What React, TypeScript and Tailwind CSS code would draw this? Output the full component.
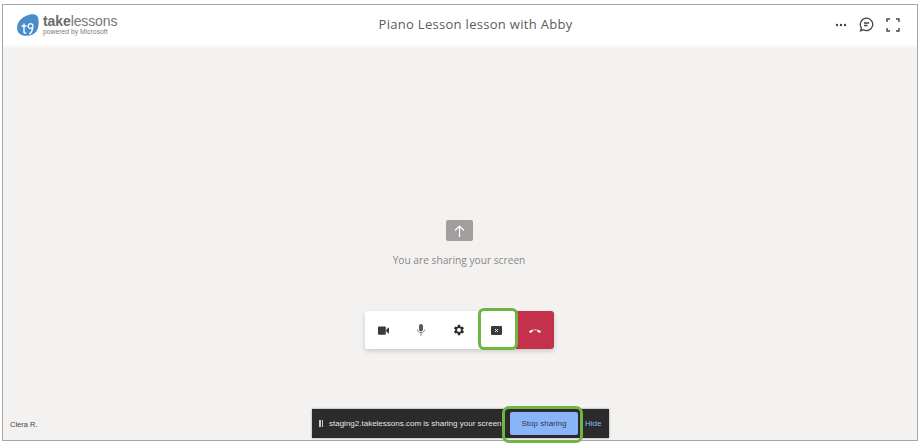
import { Fragment } from "react";

function Logo() {
  return (
    <div className="flex items-center gap-[4px]">
      <svg width="22" height="24" viewBox="0 0 22 23">
        <path d="M2 8C5 4 10 1 15 .7c4-.2 6 1.300 6.500 5 .5 4 0 9-2 12-2.500 3.500-7 5-12 4.500-4-.4-7-2.500-7.300-6.700C0 13 .5 10 2 8z" fill="#4a8cc9" />
        <path d="M7 10v8.500c0 1 1 1.500 2.300.8M4.500 12.500h5" stroke="#fff" strokeWidth="1.400" fill="none" />
        <path d="M16 12.500a2.400 2.400 0 1 0-.3 1.200c0 2.300-1 5-3.300 7" stroke="#fff" strokeWidth="1.400" fill="none" />
      </svg>
      <div className="flex flex-col leading-none">
        <div className="text-[14px] leading-[14px] text-[#777] tracking-[-0.1px]">
          <span className="font-bold text-[#6a6a6a]">take</span>
          <span>lessons</span>
        </div>
        <div className="text-[6.800px] leading-[8px] text-[#808080] font-medium">powered by Microsoft</div>
      </div>
    </div>
  );
}

function Header() {
  return (
    <header className="h-[39px] bg-white flex items-center relative pl-[14px] pr-[17px] justify-between">
      <Logo />
      <div className="absolute left-0 right-0 text-center text-[13px] text-[#5c5c5c] tracking-[0.3px] pointer-events-none pl-[31px] font-['Open_Sans',sans-serif]">
        Piano Lesson lesson with Abby
      </div>
      <div className="flex items-center gap-[12px]">
        <svg width="12" height="4" viewBox="0 0 12 4" fill="#444">
          <circle cx="2" cy="2" r="1.200" />
          <circle cx="6" cy="2" r="1.200" />
          <circle cx="10" cy="2" r="1.200" />
        </svg>
        <svg width="15" height="15" viewBox="0 0 15 15" fill="none" stroke="#444" strokeWidth="1.300">
          <path d="M7.500 1.200a6.200 6.200 0 1 1-3 11.600L1.500 13.800l.9-3A6.200 6.200 0 0 1 7.500 1.200z" />
          <path d="M5 6h5M5 8.500h3.500" />
        </svg>
        <svg width="14" height="14" viewBox="0 0 14 14" fill="none" stroke="#444" strokeWidth="1.400">
          <path d="M1 4V1h3M10 1h3v3M13 10v3h-3M4 13H1v-3" />
        </svg>
      </div>
    </header>
  );
}

function Toolbar() {
  const iconCell = "w-[38px] flex items-center justify-center";
  return (
    <div className="flex h-[38px] rounded-[3px] shadow-[0_2px_5px_rgba(0,0,0,0.18)] relative">
      <div className="flex bg-white rounded-l-[3px] w-[151px]">
        <div className={iconCell}>
          <svg width="11" height="9" viewBox="0 0 12 9" fill="#3a3a3a">
            <rect width="8.500" height="9" rx="1" />
            <path d="M9 3.300 12 1v7L9 5.700z" />
          </svg>
        </div>
        <div className={iconCell}>
          <svg width="8" height="12" viewBox="0 0 8 12" fill="#5a5a5a">
            <rect x="2" width="4" height="7.500" rx="2" />
            <path d="M.5 5.500c0 2 1.500 3.300 3.500 3.300s3.500-1.300 3.500-3.300" stroke="#8a8a8a" fill="none" />
            <rect x="3.500" y="8.500" width="1" height="3.500" fill="#8a8a8a" />
          </svg>
        </div>
        <div className={iconCell}>
          <svg width="14" height="14" viewBox="0 0 24 24" fill="#2e2e2e">
            <path d="M19.400 13a7.600 7.600 0 0 0 0-2l2.100-1.600-2-3.500-2.500 1a7.500 7.500 0 0 0-1.700-1L15 3.200h-4l-.4 2.700c-.6.200-1.200.6-1.700 1l-2.500-1-2 3.500L6.500 11a7.600 7.600 0 0 0 0 2l-2.100 1.600 2 3.500 2.500-1c.5.400 1.100.8 1.700 1l.4 2.700h4l.4-2.700c.6-.2 1.200-.6 1.700-1l2.500 1 2-3.500zM13 15.500a3.500 3.500 0 1 1 0-7 3.500 3.500 0 0 1 0 7z" transform="translate(-1)" />
          </svg>
        </div>
        <div className={iconCell}>
          <svg width="11" height="9" viewBox="0 0 11 9">
            <rect width="11" height="9" rx="1" fill="#3a3a3a" />
            <path d="M4 3l3 3M7 3 4 6" stroke="#fff" strokeWidth="0.900" />
          </svg>
        </div>
      </div>
      <div className="w-[38px] bg-[#c4314b] rounded-r-[3px] flex items-center justify-center">
        <svg width="12" height="5" viewBox="0 0 12 5" fill="#fff">
          <path d="M0 3.500C1.500.8 10.500.8 12 3.500L10.800 5 8.500 3.800V2.600c-1.500-.4-3.500-.4-5 0v1.200L1.200 5z" />
        </svg>
      </div>
      <div className="absolute left-[113px] top-[-3px] w-[40px] h-[42px] border-[3px] border-[#6fb544] rounded-[6px]"></div>
    </div>
  );
}

function ShareBar() {
  return (
    <div className="absolute bottom-[2px] left-[309px] w-[297px] h-[29px] bg-[#2b2b2b] flex items-center font-['Liberation_Sans',sans-serif] shadow-[0_0_2px_rgba(0,0,0,0.4)]">
      <span className="ml-[7px] flex gap-[1px]">
        <span className="w-[1.500px] h-[7px] bg-[#ccc]"></span>
        <span className="w-[1.500px] h-[7px] bg-[#ccc]"></span>
      </span>
      <span className="ml-[6px] text-[#e4e4e4] whitespace-nowrap w-[172px] text-[8px]">staging2.takelessons.com is sharing your screen.</span>
      <div className="relative">
        <div className="w-[68px] h-[23px] bg-[#8ab4f8] rounded-[2px] ml-[9px] flex items-center justify-center text-[#2f3a50] text-[8px]">Stop sharing</div>
        <div className="absolute left-[1px] top-[-6px] w-[81px] h-[37px] border-[3px] border-[#6fb544] rounded-[7px]"></div>
      </div>
      <span className="ml-[7px] text-[#8ab4f8] text-[8px]">Hide</span>
    </div>
  );
}

export default function App() {
  return (
    <Fragment>
      <div className="w-[921px] h-[445px] bg-white pt-[4px] pl-[2px] font-['Liberation_Sans',sans-serif] overflow-hidden">
        <div className="w-[916px] h-[437px] border border-[#a6a6a6] flex flex-col relative">
          <Header />
          <div className="h-[5px] bg-gradient-to-b from-white to-[#f3f2f1]"></div>
          <main className="flex-1 bg-[#f3f2f1] flex flex-col items-center pt-[171px] pr-[2px]">
            <div className="w-[27px] h-[21px] bg-[#a19f9d] rounded-[2px] flex items-center justify-center">
              <svg width="11" height="12" viewBox="0 0 11 12" fill="none" stroke="#fff" strokeWidth="1.200">
                <path d="M5.500 12V1M1 5.500l4.500-4.500L10 5.500" />
              </svg>
            </div>
            <div className="mt-[12px] text-[10.200px] leading-[14px] text-[#8a8886] font-['Open_Sans',sans-serif]">
              You are sharing your screen
            </div>
            <div className="mt-[44px]">
              <Toolbar />
            </div>
          </main>
          <div className="absolute left-[7px] bottom-[10px] text-[7.500px] leading-[10px] text-[#444]">Clera R.</div>
          <ShareBar />
        </div>
      </div>
    </Fragment>
  );
}
